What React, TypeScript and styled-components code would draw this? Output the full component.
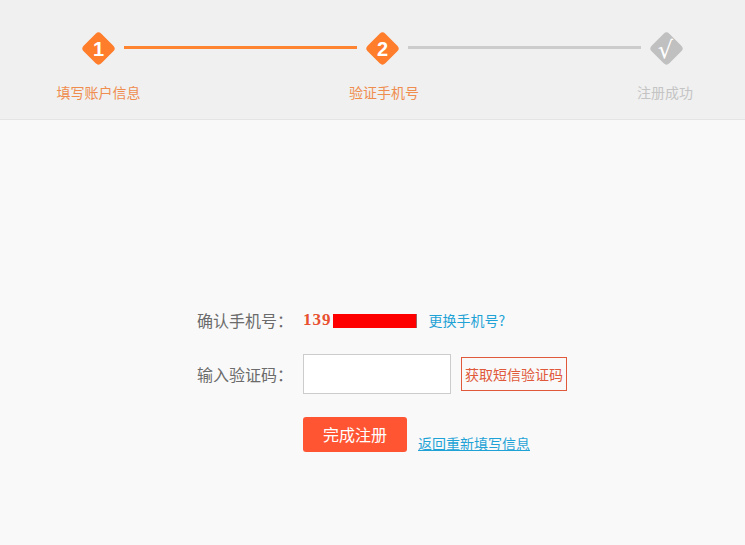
import React from "react";
import styled, { createGlobalStyle } from "styled-components";

const GlobalStyle = createGlobalStyle`
  html, body {
    margin: 0;
    padding: 0;
    background: #f9f9f9;
    font-family: "Noto Sans CJK SC", "Liberation Sans", sans-serif;
  }
`;

const Page = styled.div`
  width: 745px;
  height: 545px;
  overflow: hidden;
  background: #f9f9f9;
`;

const Header = styled.div`
  display: flex;
  box-sizing: border-box;
  height: 120px;
  padding: 32px 0 0 82px;
  background: #f0f0f0;
  border-bottom: 1px solid #e4e4e4;
`;

const Step = styled.div`
  display: flex;
  flex-direction: column;
  align-items: center;
  width: 33px;
  flex: none;
`;

const Diamond = styled.div<{ $done: boolean }>`
  display: flex;
  align-items: center;
  justify-content: center;
  width: 33px;
  height: 33px;
  position: relative;
  font: bold 20px "Liberation Sans", sans-serif;
  color: #fff;

  &::before {
    content: "";
    position: absolute;
    left: 4px;
    top: 4px;
    width: 25px;
    height: 25px;
    border-radius: 4px;
    transform: rotate(45deg);
    background: ${(p) => (p.$done ? "#ff7d2b" : "#c0c0c0")};
  }
`;

const StepNumber = styled.span`
  position: relative;
  top: 1px;
`;

const StepCheck = styled.span`
  position: relative;
  left: -1px;
  top: 1px;
  font: normal 24px "DejaVu Serif", serif;
`;

const StepLabel = styled.div<{ $done: boolean; $shift?: number }>`
  margin-top: 17px;
  margin-left: ${(p) => p.$shift || 0}px;
  font-size: 14px;
  line-height: 20px;
  white-space: nowrap;
  color: ${(p) => (p.$done ? "#ef8d4f" : "#c4c4c4")};
`;

const Connector = styled.div<{ $done: boolean }>`
  flex: none;
  width: 233px;
  height: 3px;
  margin: 14px 9px 0;
  background: ${(p) => (p.$done ? "#ff8432" : "#cccccc")};
`;

const Form = styled.div`
  padding: 188px 0 0 197px;
  color: #6b6b6b;
`;

const Row = styled.div`
  display: flex;
  align-items: center;
`;

const PhoneRow = styled(Row)`
  height: 24px;
`;

const CodeRow = styled(Row)`
  height: 40px;
  margin-top: 22px;
`;

const SubmitRow = styled(Row)`
  align-items: flex-end;
  height: 35px;
  margin: 23px 0 0 106px;
`;

const Label = styled.div`
  width: 106px;
  flex: none;
  font-size: 16px;
  line-height: 24px;
`;

const PhonePrefix = styled.span`
  font: bold 17px "Liberation Serif", serif;
  letter-spacing: 1px;
  color: #e8502f;
`;

const PhoneMask = styled.span`
  display: block;
  width: 83px;
  height: 14px;
  margin: 2px 0 0 1px;
  background: #ff0000;
  border-right: 1px solid #a06060;
`;

const ChangeLink = styled.a`
  margin-left: 12px;
  font-size: 14px;
  line-height: 20px;
  color: #1fa3d6;
`;

const CodeInput = styled.input`
  box-sizing: border-box;
  width: 148px;
  height: 40px;
  padding: 0 8px;
  background: #fff;
  border: 1px solid #cccccc;
  outline: none;
`;

const SendButton = styled.button`
  box-sizing: border-box;
  width: 106px;
  height: 34px;
  margin-left: 10px;
  padding: 0;
  font-family: inherit;
  font-size: 14px;
  color: #e0593a;
  background: transparent;
  border: 1px solid #e0593a;
`;

const SubmitButton = styled.button`
  width: 104px;
  height: 35px;
  padding: 0 0 2px;
  font-family: inherit;
  font-size: 16px;
  color: #fff;
  background: #ff5533;
  border: 0;
  border-radius: 3px;
`;

const BackLink = styled.a`
  margin: 0 0 -1px 11px;
  font-size: 14px;
  line-height: 20px;
  color: #1fa3d6;
  text-decoration: underline;
`;

export default function App() {
  return (
    <Page>
      <GlobalStyle />
      <Header>
        <Step>
          <Diamond $done>
            <StepNumber>1</StepNumber>
          </Diamond>
          <StepLabel $done>填写账户信息</StepLabel>
        </Step>
        <Connector $done />
        <Step>
          <Diamond $done>
            <StepNumber>2</StepNumber>
          </Diamond>
          <StepLabel $done $shift={3}>验证手机号</StepLabel>
        </Step>
        <Connector $done={false} />
        <Step>
          <Diamond $done={false}>
            <StepCheck>√</StepCheck>
          </Diamond>
          <StepLabel $done={false} $shift={-3}>注册成功</StepLabel>
        </Step>
      </Header>
      <Form>
        <PhoneRow>
          <Label>确认手机号：</Label>
          <PhonePrefix>139</PhonePrefix>
          <PhoneMask />
          <ChangeLink>更换手机号?</ChangeLink>
        </PhoneRow>
        <CodeRow>
          <Label>输入验证码：</Label>
          <CodeInput />
          <SendButton>获取短信验证码</SendButton>
        </CodeRow>
        <SubmitRow>
          <SubmitButton>完成注册</SubmitButton>
          <BackLink>返回重新填写信息</BackLink>
        </SubmitRow>
      </Form>
    </Page>
  );
}
